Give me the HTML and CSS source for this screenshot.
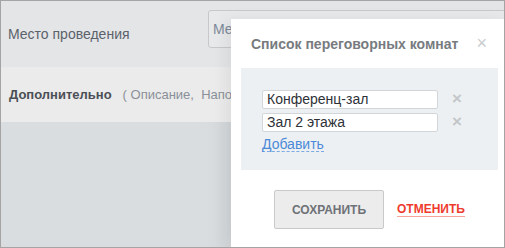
FILE: index.html
```html
<!DOCTYPE html>
<html lang="ru">
<head>
    <meta charset="UTF-8">
    <title>Список переговорных комнат</title>
    <link rel="stylesheet" href="styles.css">
</head>
<body>
    <div class="frame">
        <div class="form-row place-row">
            <div class="row-label">Место проведения</div>
            <div class="fake-input">Место</div>
        </div>
        <div class="form-row extra-row">
            <span class="extra-title">Дополнительно</span>
            <span class="extra-links">( Описание,&nbsp; Напоминание )</span>
        </div>
        <div class="dimmed"></div>

        <div class="popup">
            <div class="popup-head">
                <span class="popup-title">Список переговорных комнат</span>
                <span class="popup-close">&times;</span>
            </div>
            <div class="popup-body">
                <div class="room-row">
                    <input class="room-input" type="text" value="Конференц-зал">
                    <span class="room-remove">&times;</span>
                </div>
                <div class="room-row">
                    <input class="room-input" type="text" value="Зал 2 этажа">
                    <span class="room-remove">&times;</span>
                </div>
                <a class="add-link" href="#">Добавить</a>
            </div>
            <div class="popup-buttons">
                <button class="btn-save">Сохранить</button>
                <a class="btn-cancel" href="#">Отменить</a>
            </div>
        </div>
    </div>
</body>
</html>
```

FILE: styles.css
```css
body {
    margin: 0;
    font-family: 'Liberation Sans', Arial, sans-serif;
}

.frame {
    position: relative;
    width: 505px;
    height: 248px;
    border: 1px solid #a4a4a4;
    box-sizing: border-box;
    overflow: hidden;
    background: #d9dde0;
    display: flex;
    flex-direction: column;
}

.form-row {
    display: flex;
    align-items: center;
    flex-shrink: 0;
}

.place-row {
    height: 66px;
    background: #e4e5e7;
    padding-left: 7px;
}

.row-label {
    width: 200px;
    flex-shrink: 0;
    font-size: 14px;
    color: #5b626b;
}

.fake-input {
    width: 300px;
    flex-shrink: 0;
    height: 36px;
    margin-top: -10px;
    border: 1px solid #c6c8cb;
    border-radius: 3px;
    padding-left: 4px;
    line-height: 36px;
    font-size: 14px;
    color: #7d8a99;
    background: #e8e9eb;
}

.extra-row {
    height: 55px;
    background: #ebebeb;
    padding-left: 8px;
    font-size: 13px;
}

.extra-title {
    font-weight: bold;
    color: #4a4f55;
    margin-right: 11px;
}

.extra-links {
    color: #8a9098;
    white-space: nowrap;
}

.dimmed {
    flex: 1;
    background: linear-gradient(90deg, #d9dde0 0, #d9dde0 205px, #d2d6d9 229px);
}

/* modal window over the page */
.popup {
    position: absolute;
    left: 230px;
    top: 18px;
    width: 277px;
    bottom: 0;
    background: #ffffff;
    box-shadow: -6px 0 14px rgba(0, 0, 0, 0.06);
}

.popup-head {
    display: flex;
    align-items: center;
    justify-content: space-between;
    height: 49px;
    padding: 0 21px 0 20px;
}

.popup-title {
    font-size: 14px;
    font-weight: bold;
    color: #777b80;
}

.popup-close {
    font-size: 18px;
    color: #c8cacc;
}

.popup-body {
    margin: 0 10px 0 10px;
    height: 102px;
    background: #edf0f2;
    padding: 21px 0 0 21px;
    box-sizing: border-box;
}

.room-row {
    display: flex;
    align-items: center;
    margin-bottom: 3px;
}

.room-input {
    width: 176px;
    height: 19px;
    box-sizing: border-box;
    border: 1px solid #d3d6d9;
    border-radius: 2px;
    padding: 0 4px;
    font-family: inherit;
    font-size: 14px;
    color: #2e3238;
    background: #ffffff;
    outline: none;
}

.room-remove {
    margin-left: 14px;
    font-size: 17px;
    font-weight: bold;
    color: #c3c6c9;
}

.add-link {
    display: inline-block;
    margin-top: -1px;
    font-size: 14px;
    color: #4a8ad8;
    text-decoration: none;
    border-bottom: 1px dashed #7aa9e3;
    line-height: 14px;
}

.popup-buttons {
    display: flex;
    align-items: center;
    padding: 20px 0 0 43px;
}

.btn-save {
    width: 110px;
    height: 39px;
    border: 1px solid #c7c9cb;
    border-radius: 2px;
    background: #ececec;
    font-family: inherit;
    font-size: 12px;
    font-weight: bold;
    text-transform: uppercase;
    color: #6e7277;
}

.btn-cancel {
    margin-left: 13px;
    font-size: 12px;
    font-weight: bold;
    text-transform: uppercase;
    color: #ee3b2e;
    text-decoration: none;
    border-bottom: 1px solid #f6a39c;
    line-height: 13px;
}
```
